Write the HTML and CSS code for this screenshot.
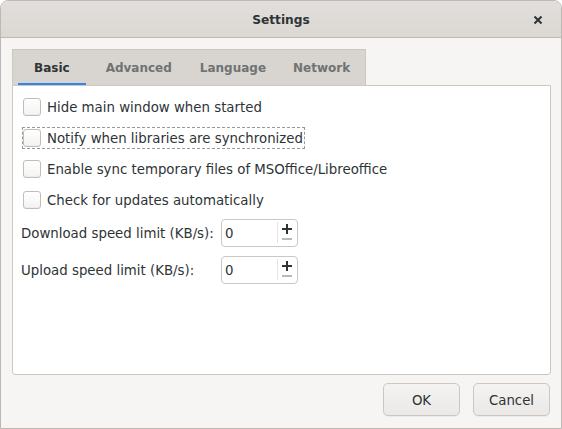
FILE: index.html
```html
<!DOCTYPE html>
<html>
<head>
<meta charset="utf-8">
<link rel="stylesheet" href="styles.css">
</head>
<body>
<div class="window">
  <div class="titlebar">
    <span class="title">Settings</span>
    <span class="close">
      <svg width="10" height="10" viewBox="0 0 10 10"><path d="M1.5 1.5 L8.5 8.5 M8.5 1.5 L1.5 8.5" stroke="#2e3436" stroke-width="2" stroke-linecap="butt"/></svg>
    </span>
  </div>
  <div class="content">
    <div class="tabbar">
      <div class="tab active">Basic</div>
      <div class="tab">Advanced</div>
      <div class="tab">Language</div>
      <div class="tab">Network</div>
    </div>
    <div class="panel">
      <div class="check-row"><span class="checkbox"></span><span>Hide main window when started</span></div>
      <div class="check-row focused"><span class="checkbox"></span><span>Notify when libraries are synchronized</span></div>
      <div class="check-row"><span class="checkbox"></span><span>Enable sync temporary files of MSOffice/Libreoffice</span></div>
      <div class="check-row"><span class="checkbox"></span><span>Check for updates automatically</span></div>
      <div class="spin-grid">
        <span class="spin-label">Download speed limit (KB/s):</span>
        <div class="spin"><span class="spin-value">0</span><span class="spin-btns"><span class="plus-h"></span><span class="plus-v"></span><span class="minus"></span></span></div>
        <span class="spin-label">Upload speed limit (KB/s):</span>
        <div class="spin"><span class="spin-value">0</span><span class="spin-btns"><span class="plus-h"></span><span class="plus-v"></span><span class="minus"></span></span></div>
      </div>
    </div>
    <div class="footer">
      <button class="btn">OK</button>
      <button class="btn">Cancel</button>
    </div>
  </div>
</div>
</body>
</html>
```
FILE: styles.css
```css
html, body {
  margin: 0;
  padding: 0;
  background: #ffffff;
}
body {
  font-family: "DejaVu Sans", sans-serif;
  font-size: 13.33px;
  color: #2e3436;
}
.window {
  width: 562px;
  height: 429px;
  box-sizing: border-box;
  border: 1px solid #bdb8b3;
  border-radius: 8px 8px 0 0;
  background: #f6f5f4;
  display: flex;
  flex-direction: column;
  overflow: hidden;
}
.titlebar {
  height: 36px;
  flex: none;
  border-bottom: 1px solid #bfb8b1;
  background: linear-gradient(#e1dedb, #dbd8d4);
  display: flex;
  align-items: center;
  justify-content: center;
  position: relative;
}
.title {
  font-weight: bold;
  font-size: 12.2px;
  color: #2e3436;
  padding-top: 2px;
}
.close {
  position: absolute;
  right: 18px;
  top: 14px;
  width: 10px;
  height: 10px;
  display: flex;
}
.content {
  flex: 1;
  display: flex;
  flex-direction: column;
  padding: 11px 10px 0 11px;
}
.tabbar {
  flex: none;
  align-self: flex-start;
  width: 354px;
  height: 36px;
  box-sizing: border-box;
  border: 1px solid #cdc7c2;
  border-bottom: none;
  background: #d8d5d1;
  display: flex;
  padding-left: 5px;
}
.tab {
  font-size: 12px;
  font-weight: bold;
  color: #6f7373;
  padding: 0 16px;
  display: flex;
  align-items: center;
  box-sizing: border-box;
  height: 35px;
  border-bottom: 2px solid transparent;
  padding-top: 2px;
}
.tab.active {
  color: #2e3436;
  border-bottom: 2px solid #3584e4;
}
.tab:nth-child(2) { padding-left: 20px; padding-right: 14px; }
.tab:nth-child(3) { padding-left: 14px; padding-right: 13px; }
.tab:nth-child(4) { padding-left: 14px; }
.panel {
  flex: none;
  height: 290px;
  box-sizing: border-box;
  border: 1px solid #cdc7c2;
  border-radius: 0 0 3px 3px;
  background: #ffffff;
  padding: 10px 0 0 0;
  display: flex;
  flex-direction: column;
  gap: 9px;
}
.check-row {
  align-self: flex-start;
  height: 22px;
  box-sizing: border-box;
  margin-left: 9px;
  padding-right: 1px;
  border: 1px solid transparent;
  display: flex;
  align-items: center;
  gap: 6px;
}
.check-row span:last-child {
  padding-top: 1px;
}
.check-row.focused {
  border: 1px dashed #9a9a98;
}
.checkbox {
  width: 18px;
  height: 18px;
  box-sizing: border-box;
  border: 1px solid #c4bdb6;
  border-radius: 3px;
  background: linear-gradient(#ffffff, #f4f3f2);
  box-shadow: inset 0 -1px 0 rgba(0,0,0,0.03);
}
.spin-grid {
  display: grid;
  grid-template-columns: 192px 77px;
  column-gap: 8px;
  row-gap: 9px;
  align-items: center;
  margin-left: 8px;
  margin-top: -1px;
}
.spin-label {
  white-space: nowrap;
  padding-top: 1px;
}
.spin {
  height: 28px;
  width: 77px;
  box-sizing: border-box;
  border: 1px solid #cdc7c2;
  border-radius: 4px;
  background: #ffffff;
  display: flex;
}
.spin-value {
  flex: 1;
  display: flex;
  align-items: center;
  padding-left: 3px;
  padding-top: 1px;
}
.spin-btns {
  width: 19px;
  border-left: 1px solid #e6e3e0;
  margin: 2px 0 3px 0;
  position: relative;
}
.plus-h {
  position: absolute;
  left: 4px;
  top: 6px;
  width: 10px;
  height: 2px;
  background: #2e3436;
}
.plus-v {
  position: absolute;
  left: 8px;
  top: 2px;
  width: 2px;
  height: 10px;
  background: #2e3436;
}
.minus {
  position: absolute;
  left: 4px;
  top: 16px;
  width: 10px;
  height: 2px;
  background: #b9bbb8;
}
.footer {
  flex: 1;
  display: flex;
  justify-content: flex-end;
  gap: 13px;
  padding: 8px 1px 0 0;
}
.btn {
  width: 77px;
  height: 33px;
  box-sizing: border-box;
  border: 1px solid #cdc7c2;
  border-radius: 5px;
  background: linear-gradient(#f4f3f2, #ebe9e7);
  font-family: "DejaVu Sans", sans-serif;
  font-size: 13.33px;
  color: #2e3436;
  box-shadow: 0 1px 0 rgba(0,0,0,0.04);
  padding: 1px 0 0 0;
}
```
